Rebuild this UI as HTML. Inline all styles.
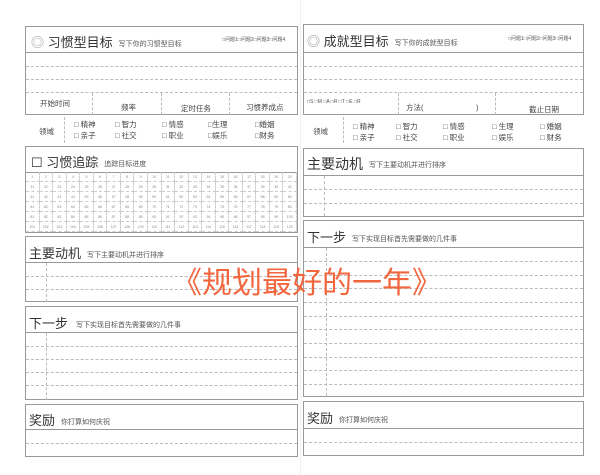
<!DOCTYPE html>
<html><head><meta charset="utf-8"><style>
*{margin:0;padding:0;box-sizing:border-box}
body{width:600px;height:475px;background:#fff;position:relative;overflow:hidden;font-family:"Liberation Sans","Noto Sans CJK SC",sans-serif;color:#444}
.a{position:absolute}
.box{position:absolute;border:1px solid #999}
.h{position:absolute;left:0;right:0;border-top:1px solid #999}
.d{position:absolute;left:0;right:0;border-top:1px dashed #bbb}
.v{position:absolute;border-left:1px dashed #bbb}
.t{position:absolute;font-size:13px;color:#333;white-space:nowrap}
.s{font-size:7px;color:#555;margin-left:6px;vertical-align:middle}
.sm{position:absolute;font-size:7px;color:#555;white-space:nowrap}
.f{position:absolute;font-size:7.5px;color:#444;white-space:nowrap}
.grid{position:absolute;left:0;top:25px;width:271px;display:grid;grid-template-columns:repeat(20,1fr);font-size:3.5px;color:#888}
.grid div{height:10px;line-height:10px;text-align:center;border-right:1px dashed #ccc;border-bottom:1px dashed #ccc}
</style></head><body>
<div class="a" style="left:300px;top:0;height:475px;border-left:1px solid #f0f0f0"></div>

<!-- LEFT habit goal -->
<div class="box" style="left:25px;top:26px;width:273px;height:89px">
 <div class="t" style="left:5px;top:5px"><span style="color:#999">◎</span> 习惯型目标<span class="s">写下你的习惯型目标</span></div>
 <div class="sm" style="left:196px;top:9px;font-size:5px">□问题1□问题2□问题3□问题4</div>
 <div class="h" style="top:25px"></div>
 <div class="d" style="top:39px"></div><div class="d" style="top:52px"></div><div class="d" style="top:65px"></div>
 <div class="v" style="left:66px;top:66px;height:22px"></div>
 <div class="v" style="left:135px;top:66px;height:22px"></div>
 <div class="v" style="left:203px;top:66px;height:22px"></div>
 <div class="f" style="left:14px;top:71px">开始时间</div>
 <div class="f" style="left:95px;top:75px">频率</div>
 <div class="f" style="left:155px;top:76px">定时任务</div>
 <div class="f" style="left:220px;top:75px">习惯养成点</div>
</div>
<div class="f" style="left:39px;top:126px">领域</div>
<div class="v" style="left:64px;top:117px;height:26px"></div>
<div class="f" style="left:74px;top:119px">□ 精神</div><div class="f" style="left:74px;top:130px">□ 亲子</div>
<div class="f" style="left:115px;top:119px">□ 智力</div><div class="f" style="left:115px;top:130px">□ 社交</div>
<div class="f" style="left:162px;top:119px">□ 情感</div><div class="f" style="left:162px;top:130px">□ 职业</div>
<div class="f" style="left:208px;top:119px">□生理</div><div class="f" style="left:208px;top:130px">□娱乐</div>
<div class="f" style="left:255px;top:119px">□婚姻</div><div class="f" style="left:255px;top:130px">□财务</div>

<!-- habit tracker -->
<div class="box" style="left:25px;top:146px;width:273px;height:87px">
 <div class="t" style="left:5px;top:5px">☐ 习惯追踪<span class="s">追踪目标进度</span></div>
 <div class="h" style="top:25px"></div>
 <div class="grid">
<div>1</div><div>2</div><div>3</div><div>4</div><div>5</div><div>6</div><div>7</div><div>8</div><div>9</div><div>10</div><div>11</div><div>12</div><div>13</div><div>14</div><div>15</div><div>16</div><div>17</div><div>18</div><div>19</div><div>20</div>
<div>21</div><div>22</div><div>23</div><div>24</div><div>25</div><div>26</div><div>27</div><div>28</div><div>29</div><div>30</div><div>31</div><div>32</div><div>33</div><div>34</div><div>35</div><div>36</div><div>37</div><div>38</div><div>39</div><div>40</div>
<div>41</div><div>42</div><div>43</div><div>44</div><div>45</div><div>46</div><div>47</div><div>48</div><div>49</div><div>50</div><div>51</div><div>52</div><div>53</div><div>54</div><div>55</div><div>56</div><div>57</div><div>58</div><div>59</div><div>60</div>
<div>61</div><div>62</div><div>63</div><div>64</div><div>65</div><div>66</div><div>67</div><div>68</div><div>69</div><div>70</div><div>71</div><div>72</div><div>73</div><div>74</div><div>75</div><div>76</div><div>77</div><div>78</div><div>79</div><div>80</div>
<div>81</div><div>82</div><div>83</div><div>84</div><div>85</div><div>86</div><div>87</div><div>88</div><div>89</div><div>90</div><div>91</div><div>92</div><div>93</div><div>94</div><div>95</div><div>96</div><div>97</div><div>98</div><div>99</div><div>100</div>
<div>101</div><div>102</div><div>103</div><div>104</div><div>105</div><div>106</div><div>107</div><div>108</div><div>109</div><div>110</div><div>111</div><div>112</div><div>113</div><div>114</div><div>115</div><div>116</div><div>117</div><div>118</div><div>119</div><div>120</div>
 </div>
</div>

<!-- left motive -->
<div class="box" style="left:25px;top:236px;width:273px;height:66px">
 <div class="t" style="left:3px;top:6px">主要动机<span class="s">写下主要动机并进行排序</span></div>
 <div class="h" style="top:25px"></div>
 <div class="d" style="top:39px"></div><div class="d" style="top:52px"></div>
 <div class="v" style="left:20px;top:26px;height:39px"></div>
</div>
<!-- left next -->
<div class="box" style="left:25px;top:306px;width:273px;height:94px">
 <div class="t" style="left:3px;top:6px">下一步<span class="s" style="margin-left:8px">写下实现目标首先需要做的几件事</span></div>
 <div class="h" style="top:25px"></div>
 <div class="d" style="top:39px"></div><div class="d" style="top:52px"></div><div class="d" style="top:65px"></div><div class="d" style="top:78px"></div>
 <div class="v" style="left:20px;top:26px;height:67px"></div>
</div>
<!-- left reward -->
<div class="box" style="left:25px;top:404px;width:273px;height:53px">
 <div class="t" style="left:3px;top:5px">奖励<span class="s">你打算如何庆祝</span></div>
 <div class="h" style="top:24px"></div>
 <div class="d" style="top:38px"></div>
</div>

<!-- RIGHT achievement -->
<div class="box" style="left:303px;top:24px;width:281px;height:91px">
 <div class="t" style="left:3px;top:6px"><span style="color:#888">◎</span> 成就型目标<span class="s">写下你的成就型目标</span></div>
 <div class="sm" style="left:204px;top:10px;font-size:5px">□问题1□问题2□问题3□问题4</div>
 <div class="h" style="top:27px"></div>
 <div class="d" style="top:41px"></div><div class="d" style="top:54px"></div><div class="d" style="top:67px"></div>
 <div class="v" style="left:94px;top:68px;height:22px"></div>
 <div class="v" style="left:191px;top:68px;height:22px"></div>
 <div class="sm" style="left:3px;top:74px;font-size:5px">□S □M □A □R □T □E □R</div>
 <div class="f" style="left:102px;top:77px">方法(　　　　　　　)</div>
 <div class="f" style="left:225px;top:79px">截止日期</div>
</div>
<div class="f" style="left:313px;top:126px">领域</div>
<div class="v" style="left:343px;top:117px;height:26px"></div>
<div class="f" style="left:353px;top:121px">□ 精神</div><div class="f" style="left:353px;top:132px">□ 亲子</div>
<div class="f" style="left:396px;top:121px">□ 智力</div><div class="f" style="left:396px;top:132px">□ 社交</div>
<div class="f" style="left:443px;top:121px">□ 情感</div><div class="f" style="left:443px;top:132px">□ 职业</div>
<div class="f" style="left:492px;top:121px">□ 生理</div><div class="f" style="left:492px;top:132px">□ 娱乐</div>
<div class="f" style="left:540px;top:121px">□ 婚姻</div><div class="f" style="left:540px;top:132px">□ 财务</div>

<div class="box" style="left:303px;top:148px;width:281px;height:69px">
 <div class="t" style="left:3px;top:5px;font-size:14px">主要动机<span class="s">写下主要动机并进行排序</span></div>
 <div class="h" style="top:26px"></div>
 <div class="d" style="top:40px"></div><div class="d" style="top:54px"></div>
 <div class="v" style="left:20px;top:27px;height:40px"></div>
</div>
<div class="box" style="left:303px;top:220px;width:281px;height:177px">
 <div class="t" style="left:3px;top:6px">下一步<span class="s">写下实现目标首先需要做的几件事</span></div>
 <div class="h" style="top:26px"></div>
 <div class="d" style="top:40px"></div><div class="d" style="top:54px"></div><div class="d" style="top:67px"></div><div class="d" style="top:81px"></div><div class="d" style="top:95px"></div><div class="d" style="top:108px"></div><div class="d" style="top:122px"></div><div class="d" style="top:136px"></div><div class="d" style="top:149px"></div><div class="d" style="top:163px"></div>
 <div class="v" style="left:22px;top:27px;height:148px"></div>
</div>
<div class="box" style="left:303px;top:401px;width:281px;height:55px">
 <div class="t" style="left:3px;top:6px">奖励<span class="s">你打算如何庆祝</span></div>
 <div class="h" style="top:26px"></div>
 <div class="d" style="top:40px"></div>
</div>

<div class="a" style="left:172px;top:258px;font-size:30px;color:#f2663e;white-space:nowrap;letter-spacing:0px;font-family:'Noto Sans CJK SC',sans-serif">《规划最好的一年》</div>
</body></html>
